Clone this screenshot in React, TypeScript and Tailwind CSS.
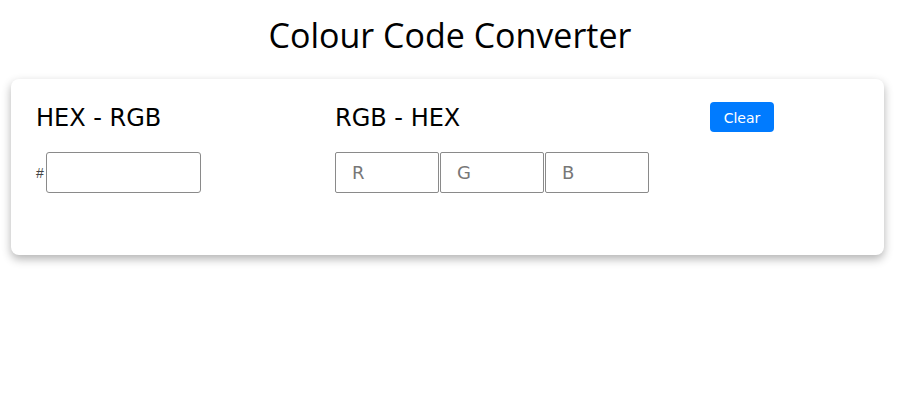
export default function App() {
  return (
    <div className="min-h-[406px] bg-white">
      <h1 className="pt-[13px] text-center text-[34px] leading-[44px] text-black font-['Open_Sans',sans-serif]">
        Colour Code Converter
      </h1>

      <div className="ml-[11px] mt-[22px] w-[873px] h-[176px] rounded-lg bg-white shadow-[0_4px_10px_rgba(0,0,0,0.3)] font-['DejaVu_Sans',sans-serif]">
        <div className="flex pl-[25px] pt-[23px]">
          {/* HEX -> RGB */}
          <div className="w-[299px]">
            <h2 className="text-[24px] leading-[32px] text-black">HEX - RGB</h2>
            <div className="mt-[18px] flex items-center">
              <span className="w-[10px] font-['Liberation_Sans',sans-serif] text-[14px] leading-none text-[#444]">#</span>
              <input
                type="text"
                className="h-[41px] w-[155px] rounded-[3px] border border-[#8a8a8a] px-3 text-lg outline-none"
              />
            </div>
          </div>

          {/* RGB -> HEX */}
          <div className="w-[375px]">
            <h2 className="text-[24px] leading-[32px] text-black">RGB - HEX</h2>
            <div className="mt-[18px] flex gap-px">
              {["R", "G", "B"].map((c) => (
                <input
                  key={c}
                  type="text"
                  placeholder={c}
                  className="h-[41px] w-[104px] rounded-[2px] border border-[#8a8a8a] pl-4 text-[18px] text-[#666] placeholder:text-[#777] outline-none"
                />
              ))}
            </div>
          </div>

          <div>
            <button
              type="button"
              className="h-[30px] w-[64px] rounded bg-[#007bff] pt-[2px] text-[14px] text-white"
            >
              Clear
            </button>
          </div>
        </div>
      </div>
    </div>
  );
}
